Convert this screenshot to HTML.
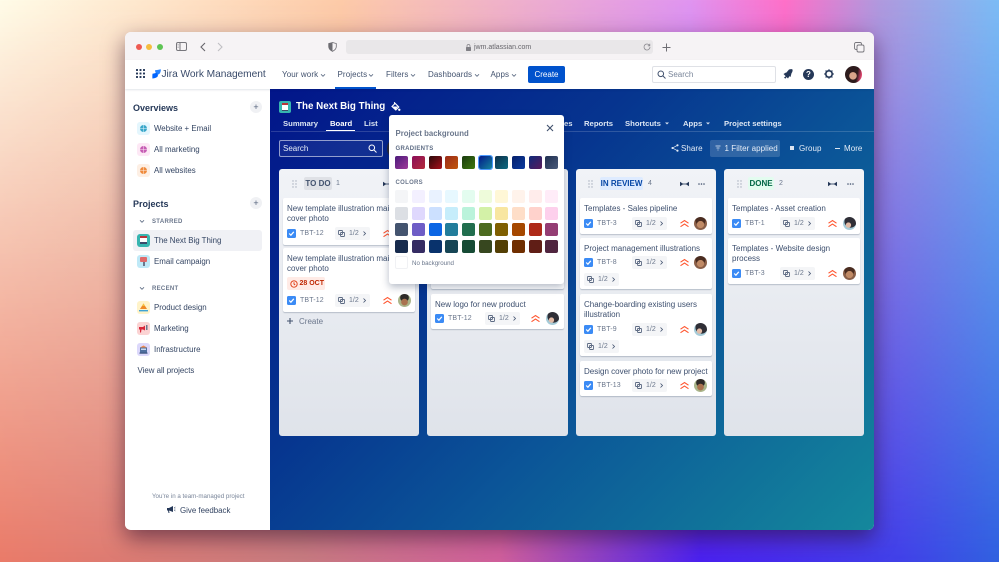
<!DOCTYPE html>
<html><head><meta charset="utf-8"><title>Jira Work Management</title>
<style>
*{box-sizing:border-box}
html,body{margin:0;padding:0;width:999px;height:562px;overflow:hidden}
body{font-family:"Liberation Sans",sans-serif;position:relative;background:#e8a0a0}
.abs,.t{position:absolute}
.t{white-space:nowrap;line-height:10px;height:10px}
#bgt,#bgb{position:absolute;left:0;width:999px;top:0;height:562px}
#bgt{background:linear-gradient(90deg,#fffce8 0,#fdcba8 340px,#e095f0 690px,#ff70c8 785px,#b09ade 880px,#7cbcf5 999px)}
#bgb{background:linear-gradient(90deg,#ea7a68 0,#c87a80 300px,#d05e9c 500px,#4a20f0 700px,#4040e8 900px,#3060e0 999px);-webkit-mask-image:linear-gradient(180deg,transparent 0,#000 562px);mask-image:linear-gradient(180deg,transparent 0,#000 562px)}
#win{position:absolute;left:125px;top:32px;width:749px;height:498px;border-radius:6px;background:#fff;box-shadow:0 8px 22px rgba(40,10,40,.55)}
#page{position:absolute;left:0;top:0;width:999px;height:562px;clip-path:inset(32px 125px 32px 125px round 6px);filter:blur(.3px)}
#title{position:absolute;left:125px;top:32px;width:749px;height:28px;background:#f6f3f5}
#nav{position:absolute;left:125px;top:60px;width:749px;height:29px;background:#fff;box-shadow:0 1px 2px rgba(9,30,66,.12)}
#side{position:absolute;left:125px;top:89px;width:145px;height:441px;background:#fff}
#main{position:absolute;left:270px;top:89px;width:604px;height:441px;background:linear-gradient(135deg,#02158a 0,#06358f 35%,#0b5598 60%,#14889c 100%)}
.n{font-size:8px;color:#42526e;top:70px;letter-spacing:.1px}
.tab{font-size:7.7px;color:#dce6f3;top:119px;font-weight:bold}
.tn{font-size:8px;color:#e6edf7;top:143.5px;letter-spacing:.05px}
.side{font-size:7.9px;color:#344563}
.sic{position:absolute;left:137px;width:13px;height:13px;border-radius:3px}
.hd{font-size:9px;font-weight:bold;color:#253858}
.sm{font-size:6px;color:#6b778c;font-weight:bold;letter-spacing:.3px}
.plus{position:absolute;left:250px;width:12px;height:12px;border-radius:50%;background:#f0f1f4;color:#505f79;font-size:9px;line-height:12px;text-align:center}
.col{position:absolute;top:169px;height:267px;border-radius:3px;background:linear-gradient(180deg,#f1f3f7 0,#dfe3ea 100%)}
.card{position:absolute;background:#fff;border-radius:2px;box-shadow:0 1px 1px rgba(9,30,66,.22);font-size:8px;line-height:10.3px;color:#3d4f6e;left:4px;width:132px;padding:6px 4px 0 4px}
.card>span{display:block;white-space:nowrap}
.foot{position:absolute;left:0;width:132px;height:13px}
.cb{position:absolute;left:4px;top:2px;width:9px;height:9px;border-radius:1.5px;background:#3b8bf5}
.cb svg{display:block}
.id{position:absolute;left:17px;top:2px;font-size:7px;line-height:9px;color:#6b778c;letter-spacing:.15px}
.pill{position:absolute;left:52px;top:0;width:35px;height:13px;background:#f4f5f7;border-radius:2px}
.pill i{position:absolute;left:14px;top:2px;font-style:normal;font-size:7px;line-height:9px;color:#6b778c}
.pill .si{position:absolute;left:3px;top:3px}
.pill .ch{position:absolute;left:27px;top:4px}
.pr{position:absolute;left:100px;top:2px}
.av{position:absolute;left:114px;top:0;width:13px;height:13px;border-radius:50%}
.a1{background:radial-gradient(circle at 50% 58%,#c08a65 0 34%,transparent 38%),radial-gradient(circle at 50% 25%,#4a2c20 0 42%,transparent 46%),#8a5f48}
.a2{background:radial-gradient(circle at 42% 62%,#e2bba6 0 22%,transparent 26%),radial-gradient(circle at 58% 35%,#2f2e36 0 52%,transparent 56%),#a5cbd8}
.a3{background:radial-gradient(circle at 50% 62%,#a9724f 0 30%,transparent 34%),radial-gradient(circle at 50% 28%,#2e2a28 0 36%,transparent 40%),#a9b58a}
.ct{position:absolute;top:8px;height:13px;font-size:8px;font-weight:bold;line-height:13px;text-align:center;border-radius:2px}
.cn{position:absolute;top:10px;font-size:7px;line-height:9px;color:#6b778c}
.dots{position:absolute;top:11px}
.pop{position:absolute;left:389px;top:115px;width:175px;height:169px;background:#fff;border-radius:3px;box-shadow:0 3px 8px rgba(9,30,66,.3)}
.s{position:absolute;width:13px;height:13px;border-radius:2px}
</style></head><body>
<svg width="0" height="0" style="position:absolute">
<symbol id="ck" viewBox="0 0 9 9"><path d="M2.2 4.500 3.900 6.200 6.800 2.800" fill="none" stroke="#fff" stroke-width="1.200"/></symbol>
<symbol id="sb" viewBox="0 0 7 7"><g fill="none" stroke="#5e6c84" stroke-width=".9"><rect x=".5" y=".5" width="4" height="4" rx=".6"/><rect x="2.500" y="2.500" width="4" height="4" rx=".6"/></g></symbol>
<symbol id="cr" viewBox="0 0 5 5"><path d="M1.500.5l2 2-2 2" fill="none" stroke="#42526e" stroke-width=".8"/></symbol>
<symbol id="pri" viewBox="0 0 9 9"><path d="M.5 4.200 4.500 1.500 8.500 4.200M.5 7.700 4.500 5 8.500 7.700" fill="none" stroke="#ff5630" stroke-width="1.100"/></symbol>
<symbol id="gr" viewBox="0 0 5 8"><g fill="#a5adba"><circle cx="1" cy="1" r=".7"/><circle cx="4" cy="1" r=".7"/><circle cx="1" cy="4" r=".7"/><circle cx="4" cy="4" r=".7"/><circle cx="1" cy="7" r=".7"/><circle cx="4" cy="7" r=".7"/></g></symbol>
<symbol id="ex" viewBox="0 0 9 6"><path d="M0 .8 3.400 3 0 5.200zM9 .8 5.600 3 9 5.200z" fill="#253858"/><path d="M2 3h5" stroke="#253858" stroke-width=".8"/></symbol>
<symbol id="mo" viewBox="0 0 7 2"><g fill="#42526e"><circle cx="1" cy="1" r=".8"/><circle cx="3.500" cy="1" r=".8"/><circle cx="6" cy="1" r=".8"/></g></symbol>
<symbol id="dn" viewBox="0 0 6 5"><path d="M1 1.300 3 3.300 5 1.300" fill="none" stroke="#5e6c84" stroke-width=".9"/></symbol>
</svg>
<div id="bgt"></div><div id="bgb"></div>
<div id="win"></div>
<div id="page">
<div id="title"></div><div id="side"></div><div id="main"></div><div id="nav"></div>

<!-- title bar -->
<div class="abs" style="left:136px;top:44px;width:6px;height:6px;border-radius:50%;background:#ee5a52"></div>
<div class="abs" style="left:146px;top:44px;width:6px;height:6px;border-radius:50%;background:#f5bd3f"></div>
<div class="abs" style="left:157px;top:44px;width:6px;height:6px;border-radius:50%;background:#5ec454"></div>
<svg class="abs" style="left:176px;top:42px" width="11" height="10" viewBox="0 0 11 10" fill="none" stroke="#77767c"><rect x=".5" y=".5" width="10" height="8" rx="1.5"/><path d="M4 .5v8"/><path d="M1.500 2.500h1.200M1.500 4h1.200M1.500 5.500h1.200" stroke-width=".6"/></svg>
<svg class="abs" style="left:199px;top:42px" width="8" height="10" viewBox="0 0 8 10" fill="none" stroke="#67666c" stroke-width="1.100"><path d="M6 1 2 5l4 4"/></svg>
<svg class="abs" style="left:216px;top:42px" width="8" height="10" viewBox="0 0 8 10" fill="none" stroke="#c0bfc4" stroke-width="1.100"><path d="M2 1l4 4-4 4"/></svg>
<svg class="abs" style="left:328px;top:42px" width="9" height="10" viewBox="0 0 9 10"><path d="M4.500.5 8.300 1.500v3c0 2.400-1.700 3.800-3.800 4.900C2.400 8.300.7 6.900.7 4.500v-3z" fill="#f6f3f5" stroke="#6d6c72" stroke-width=".8"/><path d="M4.500.5v8.900C2.400 8.300.7 6.900.7 4.500v-3z" fill="#6d6c72"/></svg>
<div class="abs" style="left:346px;top:40px;width:307px;height:14px;background:#e9e7e9;border-radius:3px"></div>
<svg class="abs" style="left:466px;top:44px" width="5" height="7" viewBox="0 0 5 7"><rect y="3" width="5" height="4" rx=".6" fill="#807f85"/><path d="M1 3V2a1.500 1.500 0 0 1 3 0v1" fill="none" stroke="#807f85" stroke-width=".7"/></svg>
<div class="t" style="left:474px;top:42.500px;font-size:7px;color:#66656b">jwm.atlassian.com</div>
<svg class="abs" style="left:643px;top:43px" width="8" height="8" viewBox="0 0 8 8" fill="none" stroke="#8b8a90" stroke-width=".8"><path d="M6.600 2.500A3 3 0 1 0 7 4M6.800 .8v2H4.800"/></svg>
<svg class="abs" style="left:662px;top:43px" width="9" height="9" viewBox="0 0 9 9" stroke="#6f6e74" stroke-width="1"><path d="M4.500.5v8M.5 4.500h8"/></svg>
<svg class="abs" style="left:854px;top:42px" width="11" height="11" viewBox="0 0 11 11" fill="#f6f3f5" stroke="#77767c" stroke-width=".9"><rect x=".5" y=".5" width="7" height="7" rx="1.500"/><rect x="3" y="3" width="7" height="7" rx="1.500"/></svg>

<!-- nav -->
<svg class="abs" style="left:136px;top:69px" width="9" height="9" viewBox="0 0 9 9" fill="#253858"><rect width="2" height="2" rx=".5"/><rect x="3.500" width="2" height="2" rx=".5"/><rect x="7" width="2" height="2" rx=".5"/><rect y="3.500" width="2" height="2" rx=".5"/><rect x="3.500" y="3.500" width="2" height="2" rx=".5"/><rect x="7" y="3.500" width="2" height="2" rx=".5"/><rect y="7" width="2" height="2" rx=".5"/><rect x="3.500" y="7" width="2" height="2" rx=".5"/><rect x="7" y="7" width="2" height="2" rx=".5"/></svg>
<svg class="abs" style="left:152px;top:69px" width="9" height="10" viewBox="0 0 9 10"><path d="M3 1.200Q6 1.200 8.800.3 9 3 7.500 4.800 6.500 5.800 5 5.800 3.200 3.800 3 1.200z" fill="#2684ff"/><path d="M.5 4.800Q3 4.300 4.800 3.800 6.200 5.400 5.800 7.200 4.500 9.100.4 9.500.2 7 .5 4.800z" fill="#0065ff"/></svg>
<div class="t" style="left:161.500px;top:69.500px;font-size:10.200px;color:#3a4b6a;letter-spacing:-.05px">Jira Work Management</div>
<div class="t n" style="left:282px">Your work</div>
<div class="t n" style="left:337.500px">Projects</div>
<div class="t n" style="left:386px">Filters</div>
<div class="t n" style="left:428px">Dashboards</div>
<div class="t n" style="left:490.500px">Apps</div>
<svg class="abs" style="left:320px;top:72.500px" width="6" height="5"><use href="#dn"/></svg>
<svg class="abs" style="left:368px;top:72.500px" width="6" height="5"><use href="#dn"/></svg>
<svg class="abs" style="left:410px;top:72.500px" width="6" height="5"><use href="#dn"/></svg>
<svg class="abs" style="left:474px;top:72.500px" width="6" height="5"><use href="#dn"/></svg>
<svg class="abs" style="left:511px;top:72.500px" width="6" height="5"><use href="#dn"/></svg>
<div class="abs" style="left:335px;top:87px;width:41px;height:2px;background:#0052cc"></div>
<div class="abs" style="left:528px;top:66px;width:37px;height:17px;background:#0052cc;border-radius:2px;color:#fff;font-size:8px;line-height:17px;text-align:center">Create</div>
<div class="abs" style="left:652px;top:66px;width:124px;height:17px;background:#fff;border:1px solid #dfe1e6;border-radius:2px"></div>
<svg class="abs" style="left:657px;top:70px" width="9" height="9" viewBox="0 0 9 9" fill="none" stroke="#42526e" stroke-width="1"><circle cx="3.800" cy="3.800" r="2.800"/><path d="M6 6l2.500 2.500"/></svg>
<div class="t" style="left:668px;top:70px;font-size:8px;color:#7a869a">Search</div>
<svg class="abs" style="left:783px;top:69px" width="10" height="10" viewBox="0 0 10 10" fill="#253858"><path d="M6 .5c1.500-.5 3-.5 3.500 0 .3 1 0 2.500-1 3.800L7.500 8 5.800 6.800 3 4l3-3.500zM1 8.500l2-1.500 .8 .8-1.500 2z"/><path d="M.5 5 3 3.500 6.500 7 5 9.500z"/></svg>
<div class="abs" style="left:803px;top:69px;width:11px;height:11px;border-radius:50%;background:#253858;color:#fff;font-size:8px;line-height:11px;text-align:center;font-weight:bold">?</div>
<svg class="abs" style="left:824px;top:69px" width="10" height="10" viewBox="0 0 10 10" fill="none" stroke="#253858"><circle cx="5" cy="5" r="3.200" stroke-width="1.600"/><path d="M5 .2v1.400M5 8.400v1.400M.2 5h1.400M8.400 5h1.400M1.600 1.600l1 1M7.400 7.400l1 1M1.600 8.400l1-1M7.400 2.600l1-1" stroke-width="1.200"/></svg>
<div class="abs" style="left:845px;top:66px;width:17px;height:17px;border-radius:50%;background:radial-gradient(circle at 47% 58%,#d8a48a 0 26%,transparent 30%),linear-gradient(100deg,#2d1b1c 0 68%,#e0456f 90%)"></div>

<!-- sidebar -->
<div class="t hd" style="left:133px;top:102.500px">Overviews</div>
<div class="plus" style="top:101px">+</div>
<div class="sic" style="top:122px;background:#e4f6fd"></div>
<svg class="abs" style="left:140px;top:125px" width="7" height="7" viewBox="0 0 7 7" fill="#38a6c9"><circle cx="3.500" cy="3.500" r="3.500"/><path d="M0 3.500h7M3.500 0v7" stroke="#e4f6fd" stroke-width=".5"/></svg>
<div class="t side" style="left:154px;top:123.500px">Website + Email</div>
<div class="sic" style="top:143px;background:#fde8f5"></div>
<svg class="abs" style="left:140px;top:146px" width="7" height="7" viewBox="0 0 7 7" fill="#c65cb4"><circle cx="3.500" cy="3.500" r="3.500"/><path d="M0 3.500h7M3.500 0v7" stroke="#fde8f5" stroke-width=".5"/></svg>
<div class="t side" style="left:154px;top:144.500px">All marketing</div>
<div class="sic" style="top:164px;background:#fdefe4"></div>
<svg class="abs" style="left:140px;top:167px" width="7" height="7" viewBox="0 0 7 7" fill="#ef8a3c"><circle cx="3.500" cy="3.500" r="3.500"/><path d="M0 3.500h7M3.500 0v7" stroke="#fdefe4" stroke-width=".5"/></svg>
<div class="t side" style="left:154px;top:165.500px">All websites</div>
<div class="t hd" style="left:133px;top:198.500px">Projects</div>
<div class="plus" style="top:197px">+</div>
<svg class="abs" style="left:139px;top:219px" width="6" height="5"><use href="#dn"/></svg>
<div class="t sm" style="left:152px;top:216.500px">STARRED</div>
<div class="abs" style="left:133px;top:230px;width:129px;height:21px;background:#f0f1f5;border-radius:3px"></div>
<div class="sic" style="top:234px;background:#37b5b0"></div>
<div class="abs" style="left:140px;top:236px;width:7px;height:8px;background:#fff;border-top:2.500px solid #b8343a;border-bottom:2px solid #3a4a6b"></div>
<div class="t side" style="left:154px;top:236px">The Next Big Thing</div>
<div class="sic" style="top:255px;background:#bfe9f7"></div>
<div class="abs" style="left:140px;top:257px;width:7px;height:5px;background:#e06a6a;border-radius:1px"></div>
<div class="abs" style="left:143px;top:262px;width:2px;height:4px;background:#6b778c"></div>
<div class="t side" style="left:154px;top:256.500px">Email campaign</div>
<svg class="abs" style="left:139px;top:286px" width="6" height="5"><use href="#dn"/></svg>
<div class="t sm" style="left:152px;top:283.500px">RECENT</div>
<div class="sic" style="top:301px;background:#fff3c9"></div>
<svg class="abs" style="left:138px;top:302px" width="11" height="11" viewBox="0 0 11 11"><path d="M5.500 1.500 9 7H2z" fill="#f08a24"/><path d="M5.500 1.500 7 4H4z" fill="#f5c23c"/><rect x="1" y="8" width="9" height="1.400" fill="#3fa3d4"/></svg>
<div class="t side" style="left:154px;top:302.500px">Product design</div>
<div class="sic" style="top:322px;background:#fbd3d3"></div>
<svg class="abs" style="left:138px;top:323px" width="11" height="11" viewBox="0 0 11 11"><path d="M1 4h4l2-1.500v5L5 6.500H3.500L3 9.500H2L2 6.500H1z" fill="#d8263a"/><rect x="8" y="2" width="1.500" height="5" fill="#6b778c"/></svg>
<div class="t side" style="left:154px;top:323.500px">Marketing</div>
<div class="sic" style="top:343px;background:#dcd8fb"></div>
<svg class="abs" style="left:138px;top:344px" width="11" height="11" viewBox="0 0 11 11"><path d="M2 3.500 5.500 1.500 9 3.500z" fill="#f08a4b"/><rect x="2" y="3.500" width="7" height="5" fill="#4f6f9f"/><rect x="3" y="4.500" width="5" height="1.500" fill="#c9d9ef"/><rect x="1.500" y="8.500" width="8" height="1.200" fill="#3c5580"/></svg>
<div class="t side" style="left:154px;top:344.500px">Infrastructure</div>
<div class="t side" style="left:137.500px;top:365.500px">View all projects</div>
<div class="t" style="left:152px;top:491.500px;font-size:6.200px;color:#7a869a">You're in a team-managed project</div>
<svg class="abs" style="left:167px;top:505px" width="9" height="9" viewBox="0 0 9 9" fill="#253858"><path d="M0 3h2l4-2v6L2 5.500 2.500 8H1.500L1 5.500H0z"/><path d="M7 2.500 8.500 2M7 4h1.500M7 5.500 8.500 6" stroke="#253858" stroke-width=".5"/></svg>
<div class="t side" style="left:180px;top:505.500px">Give feedback</div>

<!-- board header -->
<div class="abs" style="left:279px;top:101px;width:12px;height:12px;border-radius:2px;background:#37b5b0"></div>
<div class="abs" style="left:282px;top:103px;width:6px;height:8px;background:#fff;border-top:2.500px solid #b8343a;border-bottom:1.500px solid #3a4a6b"></div>
<div class="t" style="left:296px;top:102px;font-size:9.800px;font-weight:bold;color:#fff">The Next Big Thing</div>
<svg class="abs" style="left:391px;top:102px" width="10" height="10" viewBox="0 0 10 10" fill="#fff"><path d="M3.500.8 7.800 5 4.800 8 1 4.500 3.500 2z" fill="none" stroke="#fff" stroke-width="1.100"/><path d="M1.500 4.500h5.500L4.800 7.500z"/><circle cx="8.300" cy="7.800" r="1.200" fill="#fff"/></svg>
<div class="t tab" style="left:283px">Summary</div>
<div class="t tab" style="left:330px;color:#fff">Board</div>
<div class="t tab" style="left:364px">List</div>
<div class="t tab" style="left:584px">Reports</div>
<div class="t tab" style="left:625px">Shortcuts</div>
<div class="t tab" style="left:683px">Apps</div>
<div class="t tab" style="left:724px">Project settings</div>
<div class="t tab" style="left:564px">es</div>
<svg class="abs" style="left:664px;top:121px" width="6" height="5" viewBox="0 0 6 5" fill="#d5dfee"><path d="M1 1.500h4L3 3.500z"/></svg>
<svg class="abs" style="left:705px;top:121px" width="6" height="5" viewBox="0 0 6 5" fill="#d5dfee"><path d="M1 1.500h4L3 3.500z"/></svg>
<div class="abs" style="left:326px;top:130px;width:29px;height:1px;background:#fff"></div>
<div class="abs" style="left:271px;top:131px;width:603px;height:1px;background:rgba(255,255,255,.16)"></div>
<div class="abs" style="left:279px;top:140px;width:104px;height:17px;border:1px solid rgba(255,255,255,.55);border-radius:2px;background:rgba(255,255,255,.06)"></div>
<div class="t" style="left:283px;top:143.500px;font-size:8px;color:#e6edf7">Search</div>
<svg class="abs" style="left:368px;top:144px" width="9" height="9" viewBox="0 0 9 9" fill="none" stroke="#fff" stroke-width="1"><circle cx="3.800" cy="3.800" r="2.800"/><path d="M6 6l2.500 2.500"/></svg>
<div class="abs" style="left:387px;top:141px;width:8px;height:15px;border-radius:50% 0 0 50%;background:#2b2b33"></div>

<svg class="abs" style="left:671px;top:144px" width="8" height="8" viewBox="0 0 8 8" fill="#e6edf7" stroke="#e6edf7" stroke-width=".7"><path d="M6.500 1.300 1.500 4l5 2.700" fill="none"/><circle cx="6.500" cy="1.300" r=".7"/><circle cx="1.500" cy="4" r=".7"/><circle cx="6.500" cy="6.700" r=".7"/></svg>
<div class="t tn" style="left:681px">Share</div>
<div class="abs" style="left:710px;top:140px;width:70px;height:17px;background:rgba(255,255,255,.16);border-radius:2px"></div>
<svg class="abs" style="left:715px;top:145px" width="6" height="6" viewBox="0 0 6 6" stroke="#e6edf7" stroke-width=".8"><path d="M.5 1h5M1.500 3h3M2.500 5h1"/></svg>
<div class="t tn" style="left:724.500px">1 Filter applied</div>
<div class="abs" style="left:790px;top:146px;width:4px;height:4px;background:#dbe4f1"></div>
<div class="t tn" style="left:799px">Group</div>
<div class="abs" style="left:835px;top:148px;width:5px;height:1px;background:#dbe4f1"></div>
<div class="t tn" style="left:844px">More</div>

<!-- column 1 -->
<div class="col" style="left:279px;width:140px">
 <svg class="dots" style="left:13px" width="5" height="8"><use href="#gr"/></svg>
 <div class="ct" style="left:25px;width:28px;background:#dfe1e6;color:#42526e">TO DO</div>
 <div class="cn" style="left:57px">1</div>
 <svg class="abs" style="left:104px;top:12px" width="9" height="6"><use href="#ex"/></svg>
 <div class="card" style="top:29px;height:47px"><span>New template illustration main</span><span>cover photo</span>
  <div class="foot" style="top:29px"><div class="cb"><svg width="9" height="9"><use href="#ck"/></svg></div><div class="id">TBT-12</div><div class="pill"><svg class="si" width="7" height="7"><use href="#sb"/></svg><i>1/2</i><svg class="ch" width="5" height="5"><use href="#cr"/></svg></div><svg class="pr" width="9" height="9"><use href="#pri"/></svg></div></div>
 <div class="card" style="top:79px;height:64px"><span>New template illustration main</span><span>cover photo</span>
  <div class="abs" style="left:4px;top:29px;width:38px;height:13px;background:#ffebe6;border-radius:2px"></div>
  <svg class="abs" style="left:6.500px;top:31.500px" width="8" height="8" viewBox="0 0 8 8" fill="none" stroke="#de350b" stroke-width=".9"><circle cx="4" cy="4" r="3.200"/><path d="M4 2.200V4l1.200 1"/></svg>
  <div class="abs" style="left:16.500px;top:31px;font-size:7px;line-height:9px;font-weight:bold;color:#bf2600">28 OCT</div>
  <div class="foot" style="top:46px"><div class="cb"><svg width="9" height="9"><use href="#ck"/></svg></div><div class="id">TBT-12</div><div class="pill"><svg class="si" width="7" height="7"><use href="#sb"/></svg><i>1/2</i><svg class="ch" width="5" height="5"><use href="#cr"/></svg></div><svg class="pr" width="9" height="9"><use href="#pri"/></svg><div class="av a3" style="left:115px"></div></div></div>
 <svg class="abs" style="left:7px;top:148px" width="8" height="8" viewBox="0 0 8 8" stroke="#42526e" stroke-width="1.100"><path d="M4 1v6M1 4h6"/></svg>
 <div class="t" style="left:20px;top:147.500px;font-size:8px;color:#6b778c">Create</div>
</div>

<!-- column 2 -->
<div class="col" style="left:427px;width:141px">
 <div class="card" style="top:90px;height:30px;width:133px"></div>
 <div class="card" style="top:125px;height:35px;width:133px"><span>New logo for new product</span>
  <div class="foot" style="top:18px"><div class="cb"><svg width="9" height="9"><use href="#ck"/></svg></div><div class="id">TBT-12</div><div class="pill" style="left:54px"><svg class="si" width="7" height="7"><use href="#sb"/></svg><i>1/2</i><svg class="ch" width="5" height="5"><use href="#cr"/></svg></div><svg class="pr" width="9" height="9"><use href="#pri"/></svg><div class="av a2" style="left:115px"></div></div></div>
</div>

<!-- column 3 -->
<div class="col" style="left:576px;width:140px">
 <svg class="dots" style="left:12px" width="5" height="8"><use href="#gr"/></svg>
 <div class="ct" style="left:24px;width:43px;background:#deebff;color:#0747a6">IN REVIEW</div>
 <div class="cn" style="left:72px">4</div>
 <svg class="abs" style="left:104px;top:12px" width="9" height="6"><use href="#ex"/></svg>
 <svg class="abs" style="left:122px;top:14px" width="7" height="2"><use href="#mo"/></svg>
 <div class="card" style="top:29px;height:36px"><span>Templates - Sales pipeline</span>
  <div class="foot" style="top:19px"><div class="cb"><svg width="9" height="9"><use href="#ck"/></svg></div><div class="id">TBT-3</div><div class="pill"><svg class="si" width="7" height="7"><use href="#sb"/></svg><i>1/2</i><svg class="ch" width="5" height="5"><use href="#cr"/></svg></div><svg class="pr" width="9" height="9"><use href="#pri"/></svg><div class="av a1"></div></div></div>
 <div class="card" style="top:69px;height:51px"><span>Project management illustrations</span>
  <div class="foot" style="top:18px"><div class="cb"><svg width="9" height="9"><use href="#ck"/></svg></div><div class="id">TBT-8</div><div class="pill"><svg class="si" width="7" height="7"><use href="#sb"/></svg><i>1/2</i><svg class="ch" width="5" height="5"><use href="#cr"/></svg></div><svg class="pr" width="9" height="9"><use href="#pri"/></svg><div class="av a1"></div></div>
  <div class="foot" style="top:35px"><div class="pill" style="left:4px"><svg class="si" width="7" height="7"><use href="#sb"/></svg><i>1/2</i><svg class="ch" width="5" height="5"><use href="#cr"/></svg></div></div></div>
 <div class="card" style="top:125px;height:62px"><span>Change-boarding existing users</span><span>illustration</span>
  <div class="foot" style="top:29px"><div class="cb"><svg width="9" height="9"><use href="#ck"/></svg></div><div class="id">TBT-9</div><div class="pill"><svg class="si" width="7" height="7"><use href="#sb"/></svg><i>1/2</i><svg class="ch" width="5" height="5"><use href="#cr"/></svg></div><svg class="pr" width="9" height="9"><use href="#pri"/></svg><div class="av a2"></div></div>
  <div class="foot" style="top:46px"><div class="pill" style="left:4px"><svg class="si" width="7" height="7"><use href="#sb"/></svg><i>1/2</i><svg class="ch" width="5" height="5"><use href="#cr"/></svg></div></div></div>
 <div class="card" style="top:192px;height:35px"><span>Design cover photo for new project</span>
  <div class="foot" style="top:18px"><div class="cb"><svg width="9" height="9"><use href="#ck"/></svg></div><div class="id">TBT-13</div><div class="pill"><svg class="si" width="7" height="7"><use href="#sb"/></svg><i>1/2</i><svg class="ch" width="5" height="5"><use href="#cr"/></svg></div><svg class="pr" width="9" height="9"><use href="#pri"/></svg><div class="av a3"></div></div></div>
</div>

<!-- column 4 -->
<div class="col" style="left:724px;width:140px">
 <svg class="dots" style="left:13px" width="5" height="8"><use href="#gr"/></svg>
 <div class="ct" style="left:24px;width:26px;background:#e3fcef;color:#006644">DONE</div>
 <div class="cn" style="left:55px">2</div>
 <svg class="abs" style="left:104px;top:12px" width="9" height="6"><use href="#ex"/></svg>
 <svg class="abs" style="left:123px;top:14px" width="7" height="2"><use href="#mo"/></svg>
 <div class="card" style="top:29px;height:36px"><span>Templates - Asset creation</span>
  <div class="foot" style="top:19px"><div class="cb"><svg width="9" height="9"><use href="#ck"/></svg></div><div class="id">TBT-1</div><div class="pill"><svg class="si" width="7" height="7"><use href="#sb"/></svg><i>1/2</i><svg class="ch" width="5" height="5"><use href="#cr"/></svg></div><svg class="pr" width="9" height="9"><use href="#pri"/></svg><div class="av a2" style="left:115px"></div></div></div>
 <div class="card" style="top:69px;height:46px"><span>Templates - Website design</span><span>process</span>
  <div class="foot" style="top:29px"><div class="cb"><svg width="9" height="9"><use href="#ck"/></svg></div><div class="id">TBT-3</div><div class="pill"><svg class="si" width="7" height="7"><use href="#sb"/></svg><i>1/2</i><svg class="ch" width="5" height="5"><use href="#cr"/></svg></div><svg class="pr" width="9" height="9"><use href="#pri"/></svg><div class="av a1" style="left:115px"></div></div></div>
</div>

<!-- popup -->
<div class="pop"></div>
<div class="t" style="left:395.500px;top:128.500px;font-size:7.800px;font-weight:bold;color:#6b778c">Project background</div>
<svg class="abs" style="left:546px;top:124px" width="8" height="8" viewBox="0 0 8 8" stroke="#42526e" stroke-width="1.100"><path d="M1 1l6 6M7 1 1 7"/></svg>
<div class="t sm" style="left:395.500px;top:143.500px;color:#5e6c84">GRADIENTS</div>
<div class="t sm" style="left:395.500px;top:177.500px;color:#6b778c">COLORS</div>
<div class="s" style="left:395px;top:156px;background:linear-gradient(135deg,#4a1a7a,#a03a9a)"></div>
<div class="s" style="left:412px;top:156px;background:linear-gradient(135deg,#8a0f5a,#b52a3a)"></div>
<div class="s" style="left:428.700px;top:156px;background:linear-gradient(135deg,#2a0a0a,#a80f1a)"></div>
<div class="s" style="left:445.300px;top:156px;background:linear-gradient(135deg,#9a2a1a,#c2570a)"></div>
<div class="s" style="left:462px;top:156px;background:linear-gradient(135deg,#1a3a0f,#3f7a0f)"></div>
<div class="s" style="left:478.700px;top:156px;background:linear-gradient(135deg,#03188a,#13859c);outline:1.500px solid #4c9aff"></div>
<div class="s" style="left:495.300px;top:156px;background:linear-gradient(135deg,#0d2f4a,#0f6a80)"></div>
<div class="s" style="left:512px;top:156px;background:linear-gradient(135deg,#06206a,#0a3aa0)"></div>
<div class="s" style="left:528.700px;top:156px;background:linear-gradient(135deg,#0f2a7a,#5a1a5a)"></div>
<div class="s" style="left:545.300px;top:156px;background:linear-gradient(135deg,#1f2f50,#4a5a7a)"></div>
<div class="s" style="left:395px;top:190px;background:#f4f5f7"></div><div class="s" style="left:412px;top:190px;background:#f3f0ff"></div><div class="s" style="left:428.700px;top:190px;background:#e9f2ff"></div><div class="s" style="left:445.300px;top:190px;background:#e7f8ff"></div><div class="s" style="left:462px;top:190px;background:#e3fcef"></div><div class="s" style="left:478.700px;top:190px;background:#eefbda"></div><div class="s" style="left:495.300px;top:190px;background:#fff7d6"></div><div class="s" style="left:512px;top:190px;background:#fff3eb"></div><div class="s" style="left:528.700px;top:190px;background:#ffeceb"></div><div class="s" style="left:545.300px;top:190px;background:#ffecf8"></div>
<div class="s" style="left:395px;top:206.700px;background:#dcdfe4"></div><div class="s" style="left:412px;top:206.700px;background:#dfd8fd"></div><div class="s" style="left:428.700px;top:206.700px;background:#cce0ff"></div><div class="s" style="left:445.300px;top:206.700px;background:#c6edfb"></div><div class="s" style="left:462px;top:206.700px;background:#baf3db"></div><div class="s" style="left:478.700px;top:206.700px;background:#d3f1a7"></div><div class="s" style="left:495.300px;top:206.700px;background:#f8e6a0"></div><div class="s" style="left:512px;top:206.700px;background:#fedec8"></div><div class="s" style="left:528.700px;top:206.700px;background:#ffd2cc"></div><div class="s" style="left:545.300px;top:206.700px;background:#fdd0ec"></div>
<div class="s" style="left:395px;top:223px;background:#44546f"></div><div class="s" style="left:412px;top:223px;background:#6e5dc6"></div><div class="s" style="left:428.700px;top:223px;background:#0c66e4"></div><div class="s" style="left:445.300px;top:223px;background:#227d9b"></div><div class="s" style="left:462px;top:223px;background:#216e4e"></div><div class="s" style="left:478.700px;top:223px;background:#4c6b1f"></div><div class="s" style="left:495.300px;top:223px;background:#7f5f01"></div><div class="s" style="left:512px;top:223px;background:#a54800"></div><div class="s" style="left:528.700px;top:223px;background:#ae2a19"></div><div class="s" style="left:545.300px;top:223px;background:#943d73"></div>
<div class="s" style="left:395px;top:240px;background:#172b4d"></div><div class="s" style="left:412px;top:240px;background:#352c63"></div><div class="s" style="left:428.700px;top:240px;background:#09326c"></div><div class="s" style="left:445.300px;top:240px;background:#164555"></div><div class="s" style="left:462px;top:240px;background:#164b35"></div><div class="s" style="left:478.700px;top:240px;background:#37471f"></div><div class="s" style="left:495.300px;top:240px;background:#533f04"></div><div class="s" style="left:512px;top:240px;background:#702e00"></div><div class="s" style="left:528.700px;top:240px;background:#601e16"></div><div class="s" style="left:545.300px;top:240px;background:#50253f"></div>
<div class="s" style="left:395px;top:256px;background:#fff;border:1px solid #f0f1f4"></div>
<div class="t" style="left:412px;top:258.500px;font-size:6.200px;color:#6b778c">No background</div>
</div>
</body></html>
